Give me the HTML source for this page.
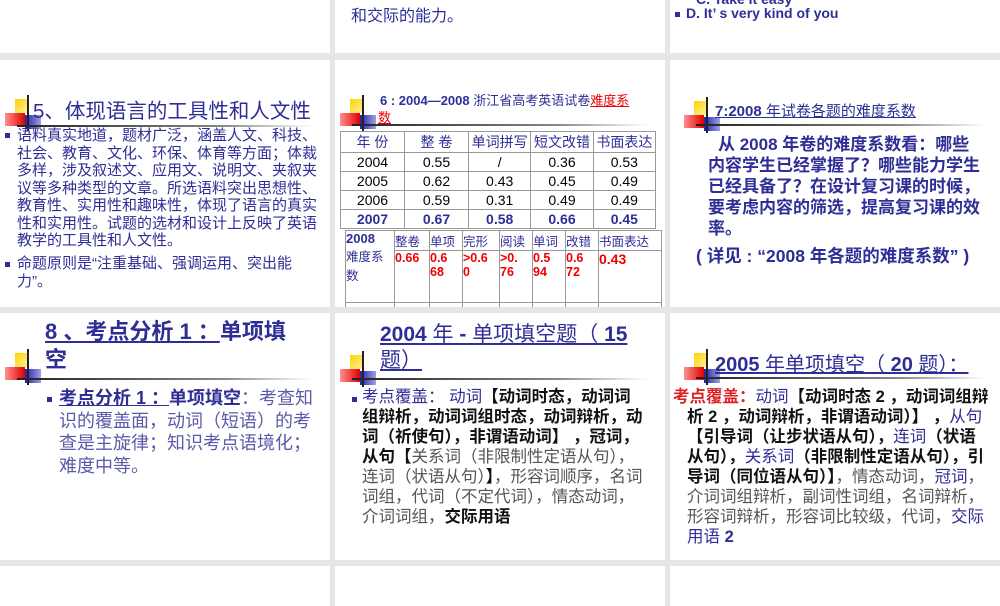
<!DOCTYPE html><html><head><meta charset="utf-8"><style>
*{margin:0;padding:0}
body{width:1000px;height:600px;background:#e6e6e6;position:relative;overflow:hidden;font-family:"Liberation Sans","Noto Sans CJK SC",sans-serif}
.s{position:absolute;background:#fff;overflow:hidden}
.a{position:absolute;white-space:nowrap}
.lg{position:absolute;width:40px;height:36px}
.lg .y{position:absolute;left:10px;top:4px;width:14px;height:14px;background:linear-gradient(135deg,#ffd200,#fff2a0)}
.lg .r{position:absolute;left:0;top:18px;width:20px;height:13px;background:linear-gradient(90deg,#ff9090,#e00000)}
.lg .b{position:absolute;left:20px;top:20px;width:16px;height:14px;background:linear-gradient(90deg,#2020b0,#a0a0e0)}
.lg .v{position:absolute;left:22px;top:0;width:1.5px;height:36px;background:#222}
.hl{position:absolute;height:1.5px;background:linear-gradient(90deg,#222,#888 70%,#fff)}
.bl{color:#2e2e96}
.sq{position:absolute;width:5px;height:5px;background:#2e2e96}
table{border-collapse:collapse;position:absolute;font-size:13px;text-align:center}
td{border:1px solid #999;padding:0;height:18px}
</style></head><body>
<!-- row1 -->
<div class="s" style="left:0;top:0;width:330px;height:53px"></div>
<div class="s" style="left:335px;top:0;width:330px;height:53px"><div class="a bl" style="left:16px;top:2px;font-size:16px">和交际的能力。</div></div>
<div class="s" style="left:670px;top:0;width:330px;height:53px">
<div class="a bl" style="left:26px;top:-9px;font-size:14px;font-weight:bold">C. Take it easy</div>
<div class="sq" style="left:5px;top:12px"></div>
<div class="a bl" style="left:16px;top:5px;font-size:14px;font-weight:bold">D. It’ s very kind of you</div></div>

<!-- row2 -->
<div class="s" style="left:0;top:60px;width:330px;height:247px">
<div class="lg" style="left:5px;top:35px"><div class="y"></div><div class="r"></div><div class="b"></div><div class="v"></div></div>
<div class="hl" style="left:17px;top:65px;width:295px"></div>
<div class="a bl" style="left:33px;top:34px;font-size:20.5px">5、体现语言的工具性和人文性</div>
<div class="sq" style="left:5px;top:73px"></div>
<div class="a bl" style="left:17px;top:67px;font-size:15px;line-height:17.5px;white-space:normal;width:305px">语料真实地道，题材广泛，涵盖人文、科技、社会、教育、文化、环保、体育等方面；体裁多样，涉及叙述文、应用文、说明文、夹叙夹议等多种类型的文章。所选语料突出思想性、教育性、实用性和趣味性，体现了语言的真实性和实用性。试题的选材和设计上反映了英语教学的工具性和人文性。</div>
<div class="sq" style="left:5px;top:202px"></div>
<div class="a bl" style="left:17px;top:195px;font-size:15px;line-height:17.5px;white-space:normal;width:275px">命题原则是“注重基础、强调运用、突出能力”。</div>
</div>
<div class="s" style="left:335px;top:60px;width:330px;height:247px">
<div class="lg" style="left:5px;top:35px"><div class="y"></div><div class="r"></div><div class="b"></div><div class="v"></div></div>
<div class="hl" style="left:17px;top:64px;width:295px"></div>
<div class="a bl" style="left:45px;top:30px;font-size:13px;font-weight:bold">6 : 2004—2008 <span style="font-weight:normal">浙江省高考英语试卷</span><span style="color:#e00;text-decoration:underline;font-weight:normal">难度系</span></div>
<div class="a" style="left:43px;top:47px;font-size:13px;color:#e00;text-decoration:underline">数</div>
<table style="left:5px;top:71px;width:316px;font-size:14px">
<tr class="bl"><td style="width:63px">年 份</td><td style="width:63px">整 卷</td><td>单词拼写</td><td>短文改错</td><td>书面表达</td></tr>
<tr><td>2004</td><td>0.55</td><td>/</td><td>0.36</td><td>0.53</td></tr>
<tr><td>2005</td><td>0.62</td><td>0.43</td><td>0.45</td><td>0.49</td></tr>
<tr><td>2006</td><td>0.59</td><td>0.31</td><td>0.49</td><td>0.49</td></tr>
<tr class="bl" style="font-weight:bold"><td>2007</td><td>0.67</td><td>0.58</td><td>0.66</td><td>0.45</td></tr>
</table>
<table style="left:10px;top:170px;width:317px;font-size:12.5px;text-align:left">
<tr class="bl" style="vertical-align:top"><td rowspan="2" style="width:48px"><b style="font-size:13px">2008</b><br>难度系<br>数</td><td style="width:34px">整卷</td><td style="width:32px">单项</td><td style="width:36px">完形</td><td style="width:32px">阅读</td><td style="width:32px">单词</td><td style="width:32px">改错</td><td>书面表达</td></tr>
<tr style="color:#e00;font-weight:bold;vertical-align:top;height:52px"><td>0.66</td><td>0.6<br>68</td><td>&gt;0.6<br>0</td><td>&gt;0.<br>76</td><td>0.5<br>94</td><td>0.6<br>72</td><td style="font-size:14px">0.43</td></tr>
<tr class="bl"><td>平均分</td><td>99.4</td><td>13</td><td>&gt;18</td><td>&gt;38</td><td>5.9</td><td>5.7</td><td>13.03</td></tr>
</table>
</div>
<div class="s" style="left:670px;top:60px;width:330px;height:247px">
<div class="lg" style="left:14px;top:37px"><div class="y"></div><div class="r"></div><div class="b"></div><div class="v"></div></div>
<div class="hl" style="left:26px;top:64px;width:290px"></div>
<div class="a bl" style="left:45px;top:40px;font-size:15px;text-decoration:underline"><b>7:2008</b> 年试卷各题的难度系数</div>
<div class="a bl" style="left:38px;top:74px;font-size:17px;line-height:21px;white-space:normal;width:274px;font-weight:bold;text-indent:10px">从 2008 年卷的难度系数看：哪些内容学生已经掌握了？哪些能力学生已经具备了？在设计复习课的时候，要考虑内容的筛选，提高复习课的效率。</div>
<div class="a bl" style="left:26px;top:183px;font-size:17.5px;font-weight:bold">( 详见 : “2008 年各题的难度系数” )</div>
</div>

<!-- row3 -->
<div class="s" style="left:0;top:313px;width:330px;height:247px">
<div class="lg" style="left:5px;top:36px"><div class="y"></div><div class="r"></div><div class="b"></div><div class="v"></div></div>
<div class="hl" style="left:17px;top:65px;width:295px"></div>
<div class="a bl" style="left:45px;top:5px;font-size:22px;font-weight:bold;line-height:28px"><u>8 、考点分析 1 ：</u>单项填<br>空</div>
<div class="sq" style="left:47px;top:84px"></div>
<div class="a" style="left:59px;top:74px;font-size:18px;line-height:22.5px;white-space:normal;width:262px;color:#5a5aa8"><b class="bl"><u>考点分析 1 ：</u>单项填空</b>：考查知识的覆盖面，动词（短语）的考查是主旋律；知识考点语境化；难度中等。</div>
</div>
<div class="s" style="left:335px;top:313px;width:330px;height:247px">
<div class="lg" style="left:5px;top:38px"><div class="y"></div><div class="r"></div><div class="b"></div><div class="v"></div></div>
<div class="hl" style="left:17px;top:65px;width:295px"></div>
<div class="a bl" style="left:45px;top:9px;font-size:21px;line-height:26px;text-decoration:underline"><b>2004</b> 年 <b>-</b> 单项填空题（ <b>15</b><br>题）</div>
<div class="sq" style="left:17px;top:84px"></div>
<div class="a" style="left:27px;top:74px;font-size:16.5px;line-height:20px;white-space:normal;width:284px;color:#555"><span class="bl">考点覆盖： 动词</span><b style="color:#111">【动词时态，动词词组辩析，动词词组时态，动词辩析，动词（祈使句），非谓语动词】 ，冠词，从句【</b>关系词（非限制性定语从句），连词（状语从句）<b style="color:#111">】</b>，形容词顺序，名词词组，代词（不定代词），情态动词，介词词组，<b style="color:#111">交际用语</b></div>
</div>
<div class="s" style="left:670px;top:313px;width:330px;height:247px">
<div class="lg" style="left:14px;top:36px"><div class="y"></div><div class="r"></div><div class="b"></div><div class="v"></div></div>
<div class="hl" style="left:26px;top:64px;width:290px"></div>
<div class="a bl" style="left:45px;top:35px;font-size:20px;text-decoration:underline"><b>2005</b> 年单项填空（ <b>20</b> 题）：</div>
<div class="a" style="left:3px;top:74px;font-size:16.5px;line-height:20px;color:#555"><b style="color:#d22">考点覆盖：</b><span class="bl">动词</span><b style="color:#111">【动词时态 2 ，动词词组辩</b></div>
<div class="a" style="left:17px;top:94px;font-size:16.5px;line-height:20px;white-space:normal;width:299px;color:#555"><b style="color:#111">析 2 ，动词辩析，非谓语动词）】 ，</b><span class="bl">从句</span><b style="color:#111">【引导词（让步状语从句），</b><span class="bl">连词</span><b style="color:#111">（状语从句），</b><span class="bl">关系词</span><b style="color:#111">（非限制性定语从句），引导词（同位语从句）】</b>，情态动词，<span class="bl">冠词</span>，介词词组辩析，副词性词组，名词辩析，形容词辩析，形容词比较级，代词，<span class="bl">交际用语 <b>2</b></span></div>
</div>

<!-- row4 -->
<div class="s" style="left:0;top:566px;width:330px;height:40px"></div>
<div class="s" style="left:335px;top:566px;width:330px;height:40px"></div>
<div class="s" style="left:670px;top:566px;width:330px;height:40px"></div>
</body></html>
